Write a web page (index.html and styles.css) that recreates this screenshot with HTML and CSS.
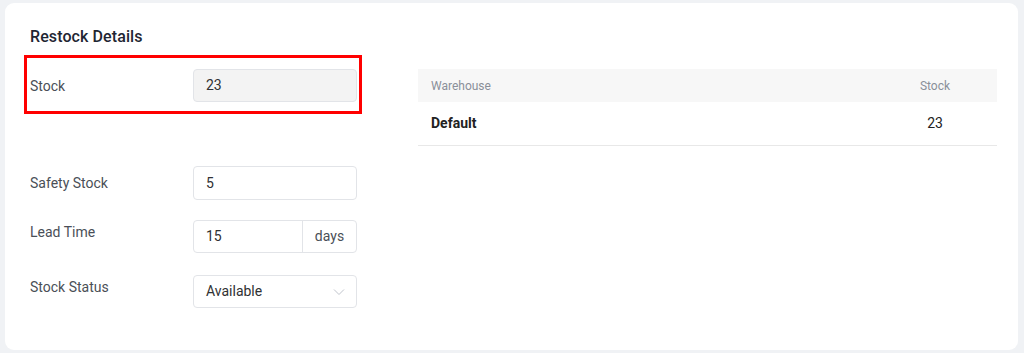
FILE: index.html
```html
<!DOCTYPE html>
<html lang="en">
<head>
    <meta charset="UTF-8">
    <meta name="viewport" content="width=device-width, initial-scale=1.0">
    <title>Restock Details</title>
    <link rel="stylesheet" href="styles.css">
</head>
<body>
    <div class="card">
        <h2 class="card-title">Restock Details</h2>

        <div class="card-body">
            <div class="form">
                <div class="form-row highlight">
                    <label class="form-label">Stock</label>
                    <div class="input readonly">23</div>
                </div>

                <div class="form-row row-safety">
                    <label class="form-label">Safety Stock</label>
                    <div class="input">5</div>
                </div>

                <div class="form-row row-top row-lead">
                    <label class="form-label">Lead Time</label>
                    <div class="input-group">
                        <div class="input-value">15</div>
                        <div class="input-addon">days</div>
                    </div>
                </div>

                <div class="form-row row-top">
                    <label class="form-label">Stock Status</label>
                    <div class="input select">
                        <span>Available</span>
                        <svg class="chevron" width="12" height="8" viewBox="0 0 12 8">
                            <path d="M1 1.5 L6 6.5 L11 1.5" fill="none" stroke="#c0c4cc" stroke-width="1"/>
                        </svg>
                    </div>
                </div>
            </div>

            <table class="stock-table">
                <thead>
                    <tr>
                        <th class="col-name">Warehouse</th>
                        <th class="col-stock">Stock</th>
                    </tr>
                </thead>
                <tbody>
                    <tr>
                        <td class="col-name"><strong>Default</strong></td>
                        <td class="col-stock">23</td>
                    </tr>
                </tbody>
            </table>
        </div>
    </div>
</body>
</html>
```

FILE: styles.css
```css
* {
    box-sizing: border-box;
}

body {
    margin: 0;
    padding: 3px 6px 3px 5px;
    background: #f0f2f5;
    font-family: Roboto, "Liberation Sans", Arial, sans-serif;
    color: #333;
}

.card {
    height: 347px;
    background: #fff;
    border-radius: 9px;
    padding: 23px 21px 0 19px;
}

.card-title {
    margin: 0 0 7px 6px;
    font-size: 16px;
    line-height: 22px;
    font-weight: 500;
    letter-spacing: 0.1px;
    color: #1f2633;
}

.card-body {
    display: flex;
    align-items: flex-start;
    gap: 56px;
}

.form {
    width: 338px;
    flex-shrink: 0;
}

.form-row {
    display: flex;
    align-items: flex-start;
    padding-left: 6px;
    padding-right: 5px;
    margin-bottom: 20px;
}

.form-label {
    width: 163px;
    flex-shrink: 0;
    font-size: 14px;
    line-height: 20px;
    color: #4a4f57;
}

.highlight {
    border: 3px solid #ff0000;
    padding: 11px 2px 9px 3px;
    align-items: center;
    margin-bottom: 52px;
}

.row-safety .form-label {
    padding-top: 7px;
}

.row-top .form-label {
    padding-top: 2px;
}

.row-lead {
    margin-bottom: 22px;
}

.input {
    width: 164px;
    height: 34px;
    border: 1px solid #e2e4e8;
    border-radius: 4px;
    padding: 0 12px;
    font-size: 14px;
    line-height: 32px;
    color: #303133;
    background: #fff;
}

.input.readonly {
    height: 33px;
    line-height: 31px;
    background: #f3f3f3;
}

.input-group {
    display: flex;
    width: 164px;
    height: 33px;
    border: 1px solid #e2e4e8;
    border-radius: 4px;
    font-size: 14px;
    line-height: 31px;
}

.input-value {
    flex: 1;
    padding: 0 12px;
    color: #303133;
}

.input-addon {
    width: 54px;
    border-left: 1px solid #e2e4e8;
    text-align: center;
    color: #4a4f57;
}

.select {
    display: flex;
    justify-content: space-between;
    align-items: center;
    height: 33px;
    line-height: 31px;
    padding-right: 11px;
}

.chevron {
    display: block;
}

.stock-table {
    flex: 1;
    margin-top: 14px;
    border-collapse: collapse;
    font-size: 14px;
}

.stock-table th {
    height: 33px;
    background: #f7f7f7;
    font-size: 12px;
    font-weight: 400;
    color: #8a8f99;
}

.stock-table td {
    height: 43px;
    border-bottom: 1px solid #e8e8e8;
    color: #222;
}

.col-name {
    text-align: left;
    padding-left: 13px;
}

.col-stock {
    width: 124px;
    text-align: center;
}

.stock-table strong {
    font-weight: 700;
}
```
